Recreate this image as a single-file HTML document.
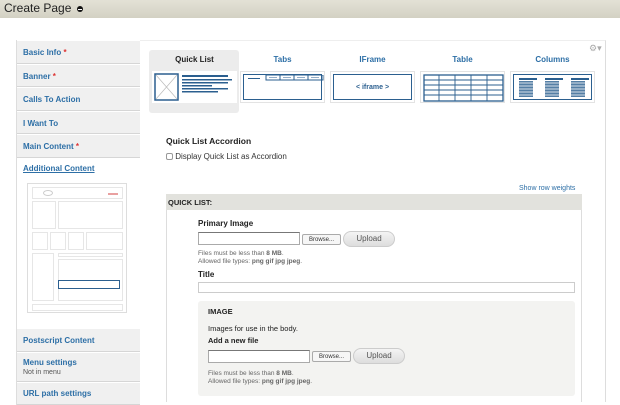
<!DOCTYPE html>
<html><head><style>
*{box-sizing:border-box;margin:0;padding:0}
body{width:620px;height:402px;overflow:hidden;background:#fff;font-family:"Liberation Sans",sans-serif;font-size:8px;color:#333;position:relative}
.a{position:absolute}
.hdr{left:0;top:0;width:620px;height:18px;background:linear-gradient(#e3e1d6,#d3d1c3);}
.hdr span{position:absolute;left:4px;top:1px;font-size:12px;color:#222}
.side{left:16px;top:40px;width:124px;border-left:1px solid #ddd}
.it{background:#f0f0f0;border-bottom:1px solid #d6d6d6;border-top:1px solid #fff;height:23.6px;padding:7px 0 0 6px;color:#2d6fa6;font-weight:bold;font-size:8px}
.it b{color:#d33}
.lnk{color:#2d6fa6}
.bold{font-weight:bold;color:#222}
.tile{width:85px;height:32px;background:#fff;border:1px solid #e3e3e3;padding:2px}
.tile>div{width:100%;height:100%;border:1.5px solid #2b5f8f;position:relative}
.lab{font-weight:bold;color:#2d6fa6;font-size:8px;width:85px;text-align:center}
.inp{border:1px solid #aaa;border-top-color:#777;background:#fff}
.br{border:1px solid #aaa;border-radius:2px;background:#f6f6f6;font-size:6px;text-align:center;line-height:10px;color:#333}
.up{border:1px solid #ccc;border-radius:8px;background:linear-gradient(#f4f4f4,#ddd);font-size:8px;text-align:center;color:#555;line-height:14px}
.sm{font-size:6.5px;color:#666;line-height:8px}
</style></head><body>
<div class="a hdr"><span>Create Page</span><div class="a" style="left:77px;top:6px;width:6px;height:6px;border-radius:50%;background:#111"><div class="a" style="left:1px;top:2.5px;width:4px;height:1px;background:#fff"></div></div></div>
<div class="a" style="left:140px;top:40px;width:466px;height:362px;border-right:1px solid #ddd;border-top:1px solid #eee"></div>
<div class="a side">
<div class="it">Basic Info <b>*</b></div>
<div class="it">Banner <b>*</b></div>
<div class="it">Calls To Action</div>
<div class="it">I Want To</div>
<div class="it">Main Content <b>*</b></div>
<div style="height:170px;background:#fff;padding:6px 0 0 6px;position:relative;width:150px"><span class="lnk" style="font-weight:bold;text-decoration:underline">Additional Content</span>
<div class="a" style="left:10px;top:25px;width:100px;height:130px;border:1px solid #ddd;background:#fff">
<div class="a" style="left:4px;top:3px;width:91px;height:12px;border:1px solid #e6e6e6"><div class="a" style="left:10px;top:2px;width:10px;height:6px;border-radius:50%;border:1px solid #ccc"></div><div class="a" style="right:4px;top:5px;width:10px;height:2px;background:#e9a0a0"></div></div>
<div class="a" style="left:4px;top:17px;width:24px;height:28px;border:1px solid #e6e6e6"></div>
<div class="a" style="left:30px;top:17px;width:65px;height:28px;border:1px solid #e6e6e6"></div>
<div class="a" style="left:4px;top:48px;width:16px;height:18px;border:1px solid #e6e6e6"></div>
<div class="a" style="left:22px;top:48px;width:16px;height:18px;border:1px solid #e6e6e6"></div>
<div class="a" style="left:40px;top:48px;width:16px;height:18px;border:1px solid #e6e6e6"></div>
<div class="a" style="left:58px;top:48px;width:37px;height:18px;border:1px solid #e6e6e6"></div>
<div class="a" style="left:4px;top:69px;width:22px;height:48px;border:1px solid #e6e6e6"></div>
<div class="a" style="left:30px;top:69px;width:65px;height:4px;border:1px solid #e6e6e6"></div>
<div class="a" style="left:30px;top:75px;width:65px;height:42px;border:1px solid #e6e6e6"></div>
<div class="a" style="left:30px;top:96px;width:62px;height:9px;border:1.5px solid #2b5f8f"></div>
<div class="a" style="left:4px;top:120px;width:91px;height:7px;border:1px solid #e6e6e6"></div>
</div>
</div>
<div class="it">Postscript Content</div>
<div class="it" style="height:30px;padding-top:5px">Menu settings<br><span style="font-weight:normal;color:#555;font-size:7px">Not in menu</span></div>
<div class="it" style="padding-top:6px">URL path settings</div>
</div>
<div class="a" style="left:149px;top:50px;width:90px;height:63px;background:#ececec;border-radius:3px"></div>
<div class="a lab" style="left:152px;top:55px;color:#222">Quick List</div>
<div class="a lab" style="left:240px;top:55px">Tabs</div>
<div class="a lab" style="left:330px;top:55px">IFrame</div>
<div class="a lab" style="left:420px;top:55px">Table</div>
<div class="a lab" style="left:510px;top:55px">Columns</div>
<div class="a" style="left:589px;top:43px;color:#aaa;font-size:9px">&#9881;&#9662;</div>
<div class="a tile" style="left:152px;top:71px;border:none;background:#fff"><div style="border:none">
<svg width="81" height="28" style="position:absolute;left:0;top:0"><rect x="1" y="1" width="23" height="26" fill="none" stroke="#2b5f8f" stroke-width="1.5"/><path d="M2 2L23 26M23 2L2 26" stroke="#bbb" stroke-width=".7"/><g fill="#2b5f8f"><rect x="28" y="2" width="46" height="2"/><rect x="28" y="6" width="50" height="1.5"/><rect x="28" y="9" width="46" height="1.5"/><rect x="28" y="12" width="30" height="1.5"/><rect x="28" y="15" width="46" height="1.5"/><rect x="28" y="18" width="36" height="1.5"/></g></svg></div></div>
<div class="a tile" style="left:240px;top:71px"><div><svg width="80" height="26" style="position:absolute;left:0;top:0"><rect x="4" y="3" width="12" height="1" fill="#2b5f8f"/><rect x="22" y="0" width="57" height="5" fill="none" stroke="#2b5f8f"/><path d="M36 0V5M50 0V5M64 0V5" stroke="#2b5f8f"/><path d="M25 2.5H33M39 2.5H47M53 2.5H61M67 2.5H75" stroke="#2b5f8f" stroke-width=".6"/></svg></div></div>
<div class="a tile" style="left:330px;top:71px"><div style="text-align:center;line-height:25px;color:#2b5f8f;font-size:7px;font-weight:bold">&lt; iframe &gt;</div></div>
<div class="a tile" style="left:420px;top:71px"><div style="border:none"><svg width="81" height="28" style="position:absolute;left:0;top:0"><rect x="1" y="1" width="79" height="26" fill="none" stroke="#2b5f8f" stroke-width="1.3"/><path d="M1 6H80M1 11H80M1 16H80M1 21H80M16 1V27M32 1V27M48 1V27M64 1V27" stroke="#2b5f8f" stroke-width=".9"/></svg></div></div>
<div class="a tile" style="left:510px;top:71px"><div><svg width="80" height="26" style="position:absolute;left:0;top:0"><g fill="#2b5f8f"><rect x="5" y="3" width="18" height="2"/><rect x="5" y="6" width="14" height="16" opacity=".8"/><rect x="31" y="3" width="18" height="2"/><rect x="31" y="6" width="14" height="16" opacity=".8"/><rect x="57" y="3" width="18" height="2"/><rect x="57" y="6" width="14" height="16" opacity=".8"/></g><path d="M5 8H19M5 11H19M5 14H19M5 17H19M5 20H19M31 8H45M31 11H45M31 14H45M31 17H45M31 20H45M57 8H71M57 11H71M57 14H71M57 17H71M57 20H71" stroke="#fff" stroke-width=".8"/></svg></div></div>
<div class="a bold" style="left:166px;top:136px;font-size:8.5px">Quick List Accordion</div>
<div class="a" style="left:166px;top:152px;font-size:8px;color:#333"><span style="display:inline-block;width:7px;height:7px;border:1px solid #999;border-radius:2px;vertical-align:-1px"></span> Display Quick List as Accordion</div>
<div class="a lnk" style="left:519px;top:185px;font-size:7px">Show row weights</div>
<div class="a" style="left:166px;top:194px;width:416px;height:208px;border:1px solid #ddd;border-bottom:none"></div>
<div class="a bold" style="left:166px;top:194px;width:416px;height:16px;background:#e2e2dd;padding:4px 0 0 2px;font-size:7.5px">QUICK LIST:</div>
<div class="a bold" style="left:198px;top:219px;font-size:8px">Primary Image</div>
<div class="a inp" style="left:198px;top:232px;width:102px;height:13px"></div>
<div class="a br" style="left:302px;top:234px;width:39px;height:11px">Browse...</div>
<div class="a up" style="left:343px;top:231px;width:52px;height:16px">Upload</div>
<div class="a sm" style="left:198px;top:250px">Files must be less than <b>8 MB</b>.<br>Allowed file types: <b>png gif jpg jpeg</b>.</div>
<div class="a bold" style="left:198px;top:270px;font-size:8px">Title</div>
<div class="a inp" style="left:198px;top:282px;width:377px;height:11px;border-color:#ccc"></div>
<div class="a" style="left:198px;top:301px;width:377px;height:95px;background:#f3f3f1;border-radius:3px"></div>
<div class="a bold" style="left:208px;top:307px;font-size:7.5px">IMAGE</div>
<div class="a" style="left:208px;top:324px;font-size:7.5px;color:#222">Images for use in the body.</div>
<div class="a bold" style="left:208px;top:336px;font-size:7.5px">Add a new file</div>
<div class="a inp" style="left:208px;top:350px;width:102px;height:13px"></div>
<div class="a br" style="left:312px;top:351px;width:39px;height:11px">Browse...</div>
<div class="a up" style="left:353px;top:348px;width:52px;height:16px">Upload</div>
<div class="a sm" style="left:208px;top:370px">Files must be less than <b>8 MB</b>.<br>Allowed file types: <b>png gif jpg jpeg</b>.</div>
</body></html>
